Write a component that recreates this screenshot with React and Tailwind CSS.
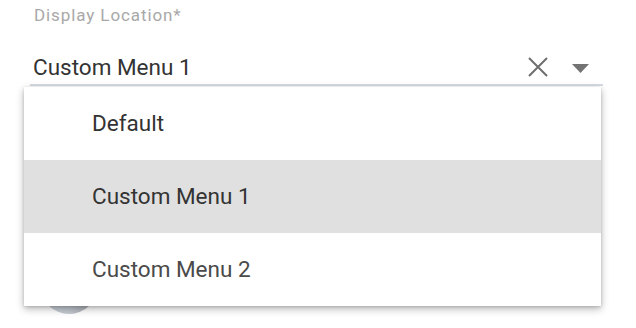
import React from 'react';

const options = ['Default', 'Custom Menu 1', 'Custom Menu 2'];

const App = () => {
  const selected = 'Custom Menu 1';
  return (
    <div className="relative w-[636px] h-[328px] bg-white overflow-hidden font-['Roboto','Liberation_Sans',sans-serif]">
      {/* form field */}
      <div className="pl-[30px] pr-[33px] pt-[4px]">
        <div className="pl-[4px] text-[17px] leading-[22px] text-[#a8a8a8] tracking-[0.9px]">
          Display Location*
        </div>
        <div className="mt-[27px] flex items-center h-[28px] border-b-2 border-[#d5dbe2] pb-[3px] box-content">
          <span className="pl-[3px] text-[22.5px] text-[#333333] leading-[28px]">{selected}</span>
          <div className="ml-auto flex items-center gap-[23px] pr-[14px]">
            <svg width="22" height="20" viewBox="0 0 22 20" className="text-[#6e6e6e]">
              <path d="M2 1 L20 19 M20 1 L2 19" stroke="currentColor" strokeWidth="2" fill="none" />
            </svg>
            <svg width="17" height="9" viewBox="0 0 17 9" className="text-[#737373] mt-[2px]">
              <path d="M0 0 H17 L8.5 9 Z" fill="currentColor" />
            </svg>
          </div>
        </div>
      </div>

      {/* toggle thumb peeking out under the menu */}
      <div className="absolute left-[40px] top-[254px] w-[58px] h-[60px] rounded-full bg-gradient-to-r from-[#cbd2db] via-[#c3c9d1] to-[#a3a6aa]" />

      {/* open menu */}
      <div className="absolute left-[24px] top-[87px] w-[577px] bg-white shadow-[0_3px_8px_rgba(0,0,0,0.28),0_1px_3px_rgba(0,0,0,0.15)]">
        {options.map((opt) => (
          <div
            key={opt}
            className={`h-[73px] flex items-center pl-[68px] text-[22.5px] ${
              opt === selected ? 'bg-[#e0e0e0] text-[#333333]' : opt === 'Default' ? 'text-[#333333]' : 'text-[#4a4a4a]'
            }`}
          >
            {opt}
          </div>
        ))}
      </div>
    </div>
  );
};

export default App;
